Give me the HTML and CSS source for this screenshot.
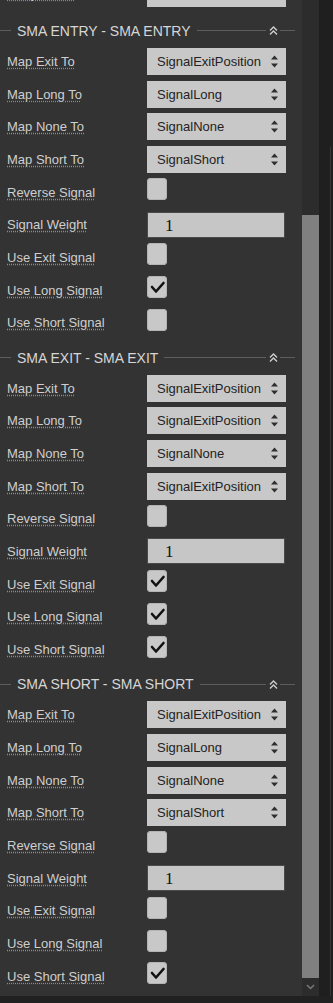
FILE: index.html
```html
<!DOCTYPE html>
<html lang="en">
<head>
  <meta charset="UTF-8">
  <meta name="viewport" content="width=device-width, initial-scale=1.0">
  <title>Strategy Parameters</title>
  <link rel="stylesheet" href="styles.css">
</head>
<body>

  <div class="window">
    <!-- Property grid -->
    <div class="panel">

      <div class="row row-cut">
        <span class="name">Entry Offset</span>
        <div class="select"><span>5 minutes</span><svg class="spin" viewBox="0 0 7 13"><polygon points="0,4.5 3.5,0.5 7,4.5"/><polygon points="0,8.5 7,8.5 3.5,12.5"/></svg></div>
      </div>

      <!-- SMA ENTRY -->
      <section class="group">
        <div class="group-head">
          <span class="line lead"></span>
          <span class="title">SMA ENTRY - SMA ENTRY</span>
          <span class="line fill"></span>
          <svg class="collapse" viewBox="0 0 9 9"><polyline points="1,4.5 4.5,1 8,4.5"/><polyline points="1,8.5 4.5,5 8,8.5"/></svg>
          <span class="line tail"></span>
        </div>
        <div class="row"><span class="name">Map Exit To</span><div class="select"><span>SignalExitPosition</span><svg class="spin" viewBox="0 0 7 13"><polygon points="0,4.5 3.5,0.5 7,4.5"/><polygon points="0,8.5 7,8.5 3.5,12.5"/></svg></div></div>
        <div class="row"><span class="name">Map Long To</span><div class="select"><span>SignalLong</span><svg class="spin" viewBox="0 0 7 13"><polygon points="0,4.5 3.5,0.5 7,4.5"/><polygon points="0,8.5 7,8.5 3.5,12.5"/></svg></div></div>
        <div class="row"><span class="name">Map None To</span><div class="select"><span>SignalNone</span><svg class="spin" viewBox="0 0 7 13"><polygon points="0,4.5 3.5,0.5 7,4.5"/><polygon points="0,8.5 7,8.5 3.5,12.5"/></svg></div></div>
        <div class="row"><span class="name">Map Short To</span><div class="select"><span>SignalShort</span><svg class="spin" viewBox="0 0 7 13"><polygon points="0,4.5 3.5,0.5 7,4.5"/><polygon points="0,8.5 7,8.5 3.5,12.5"/></svg></div></div>
        <div class="row"><span class="name">Reverse Signal</span><span class="check"></span></div>
        <div class="row"><span class="name">Signal Weight</span><div class="field">1</div></div>
        <div class="row"><span class="name">Use Exit Signal</span><span class="check"></span></div>
        <div class="row"><span class="name">Use Long Signal</span><span class="check"><svg viewBox="0 0 20 22"><polyline points="5,11 9,15.5 16.5,7"/></svg></span></div>
        <div class="row"><span class="name">Use Short Signal</span><span class="check"></span></div>
      </section>

      <!-- SMA EXIT -->
      <section class="group">
        <div class="group-head">
          <span class="line lead"></span>
          <span class="title">SMA EXIT - SMA EXIT</span>
          <span class="line fill"></span>
          <svg class="collapse" viewBox="0 0 9 9"><polyline points="1,4.5 4.5,1 8,4.5"/><polyline points="1,8.5 4.5,5 8,8.5"/></svg>
          <span class="line tail"></span>
        </div>
        <div class="row"><span class="name">Map Exit To</span><div class="select"><span>SignalExitPosition</span><svg class="spin" viewBox="0 0 7 13"><polygon points="0,4.5 3.5,0.5 7,4.5"/><polygon points="0,8.5 7,8.5 3.5,12.5"/></svg></div></div>
        <div class="row"><span class="name">Map Long To</span><div class="select"><span>SignalExitPosition</span><svg class="spin" viewBox="0 0 7 13"><polygon points="0,4.5 3.5,0.5 7,4.5"/><polygon points="0,8.5 7,8.5 3.5,12.5"/></svg></div></div>
        <div class="row"><span class="name">Map None To</span><div class="select"><span>SignalNone</span><svg class="spin" viewBox="0 0 7 13"><polygon points="0,4.5 3.5,0.5 7,4.5"/><polygon points="0,8.5 7,8.5 3.5,12.5"/></svg></div></div>
        <div class="row"><span class="name">Map Short To</span><div class="select"><span>SignalExitPosition</span><svg class="spin" viewBox="0 0 7 13"><polygon points="0,4.5 3.5,0.5 7,4.5"/><polygon points="0,8.5 7,8.5 3.5,12.5"/></svg></div></div>
        <div class="row"><span class="name">Reverse Signal</span><span class="check"></span></div>
        <div class="row"><span class="name">Signal Weight</span><div class="field">1</div></div>
        <div class="row"><span class="name">Use Exit Signal</span><span class="check"><svg viewBox="0 0 20 22"><polyline points="5,11 9,15.5 16.5,7"/></svg></span></div>
        <div class="row"><span class="name">Use Long Signal</span><span class="check"><svg viewBox="0 0 20 22"><polyline points="5,11 9,15.5 16.5,7"/></svg></span></div>
        <div class="row"><span class="name">Use Short Signal</span><span class="check"><svg viewBox="0 0 20 22"><polyline points="5,11 9,15.5 16.5,7"/></svg></span></div>
      </section>

      <!-- SMA SHORT -->
      <section class="group">
        <div class="group-head">
          <span class="line lead"></span>
          <span class="title">SMA SHORT - SMA SHORT</span>
          <span class="line fill"></span>
          <svg class="collapse" viewBox="0 0 9 9"><polyline points="1,4.5 4.5,1 8,4.5"/><polyline points="1,8.5 4.5,5 8,8.5"/></svg>
          <span class="line tail"></span>
        </div>
        <div class="row"><span class="name">Map Exit To</span><div class="select"><span>SignalExitPosition</span><svg class="spin" viewBox="0 0 7 13"><polygon points="0,4.5 3.5,0.5 7,4.5"/><polygon points="0,8.5 7,8.5 3.5,12.5"/></svg></div></div>
        <div class="row"><span class="name">Map Long To</span><div class="select"><span>SignalLong</span><svg class="spin" viewBox="0 0 7 13"><polygon points="0,4.5 3.5,0.5 7,4.5"/><polygon points="0,8.5 7,8.5 3.5,12.5"/></svg></div></div>
        <div class="row"><span class="name">Map None To</span><div class="select"><span>SignalNone</span><svg class="spin" viewBox="0 0 7 13"><polygon points="0,4.5 3.5,0.5 7,4.5"/><polygon points="0,8.5 7,8.5 3.5,12.5"/></svg></div></div>
        <div class="row"><span class="name">Map Short To</span><div class="select"><span>SignalShort</span><svg class="spin" viewBox="0 0 7 13"><polygon points="0,4.5 3.5,0.5 7,4.5"/><polygon points="0,8.5 7,8.5 3.5,12.5"/></svg></div></div>
        <div class="row"><span class="name">Reverse Signal</span><span class="check"></span></div>
        <div class="row"><span class="name">Signal Weight</span><div class="field">1</div></div>
        <div class="row"><span class="name">Use Exit Signal</span><span class="check"></span></div>
        <div class="row"><span class="name">Use Long Signal</span><span class="check"></span></div>
        <div class="row"><span class="name">Use Short Signal</span><span class="check"><svg viewBox="0 0 20 22"><polyline points="5,11 9,15.5 16.5,7"/></svg></span></div>
      </section>

    </div>

    <!-- Scrollbar -->
    <div class="scrollbar">
      <div class="track"><div class="thumb"></div></div>
      <div class="arrow"><svg viewBox="0 0 9 6"><polyline points="1,1 4.5,4.5 8,1"/></svg></div>
    </div>

    <div class="edge"><span class="edge-line"></span></div>
  </div>

</body>
</html>
```

FILE: styles.css
```css
* {
  box-sizing: border-box;
}

body {
  margin: 0;
  padding: 0;
  background: #212121;
  font-family: 'Liberation Sans', Arial, sans-serif;
  height: 1003px;
  overflow: hidden;
}

.window {
  display: flex;
  height: 996px;
  overflow: hidden;
}

/* Property grid */
.panel {
  width: 302px;
  flex: none;
  background: #333333;
  padding-right: 16px;
  overflow: hidden;
}

.row {
  display: flex;
  align-items: center;
  height: 32.7px;
}

.row-cut {
  margin-top: -22.8px;
  margin-bottom: 7.1px;
}

.name {
  width: 147px;
  flex: none;
  padding-left: 7px;
  font-size: 13px;
  color: #cfcfcf;
  text-decoration: underline dotted #8a8a8a;
  text-underline-offset: 2px;
  white-space: nowrap;
}

.select {
  width: 139px;
  height: 27px;
  background: #c8c8c8;
  color: #232323;
  font-size: 13px;
  display: flex;
  align-items: center;
  justify-content: space-between;
  padding: 0 8px 0 10px;
}

.spin {
  width: 7px;
  height: 13px;
  fill: #2e2e2e;
}

.check {
  width: 20px;
  height: 22px;
  margin-bottom: 6px;
  background: #c8c8c8;
  border-radius: 4px;
  box-shadow: inset 0 0 0 1px #b4b4b4;
}

.check svg {
  display: block;
  width: 20px;
  height: 22px;
  fill: none;
  stroke: #111;
  stroke-width: 2.6;
  stroke-linecap: round;
  stroke-linejoin: round;
}

.field {
  width: 138px;
  height: 26px;
  background: #c6c6c6;
  border: 1px solid #4a4a4a;
  padding-left: 17px;
  font-family: 'Liberation Serif', 'Times New Roman', serif;
  font-size: 17px;
  line-height: 25px;
  color: #111;
}

/* Group headers */
.group {
  margin-bottom: 4.5px;
}

.group-head {
  display: flex;
  align-items: center;
  height: 28px;
  margin-right: -9px;
}

.line {
  height: 1px;
  background: #5e5e5e;
}

.line.lead {
  width: 11px;
}

.line.fill {
  flex: 1;
}

.line.tail {
  width: 15px;
  margin-left: 2px;
}

.title {
  padding: 0 6px;
  font-size: 14px;
  color: #d6d6d6;
  white-space: nowrap;
}

.collapse {
  width: 9px;
  height: 9px;
  margin-left: 3px;
  fill: none;
  stroke: #cfcfcf;
  stroke-width: 1.4;
}

/* Scrollbar */
.scrollbar {
  width: 17px;
  flex: none;
  background: #2c2c2c;
  display: flex;
  flex-direction: column;
}

.track {
  flex: 1;
  padding-top: 215px;
}

.thumb {
  height: 763px;
  background: #808080;
}

.arrow {
  height: 18px;
  display: flex;
  align-items: center;
  justify-content: center;
}

.arrow svg {
  width: 9px;
  height: 6px;
  fill: none;
  stroke: #777;
  stroke-width: 1.5;
}

.edge {
  flex: 1;
  background: #1f1f1f;
  display: flex;
  justify-content: flex-end;
  padding: 147px 2px 0 0;
}

.edge-line {
  width: 1px;
  background: #363636;
}
```
